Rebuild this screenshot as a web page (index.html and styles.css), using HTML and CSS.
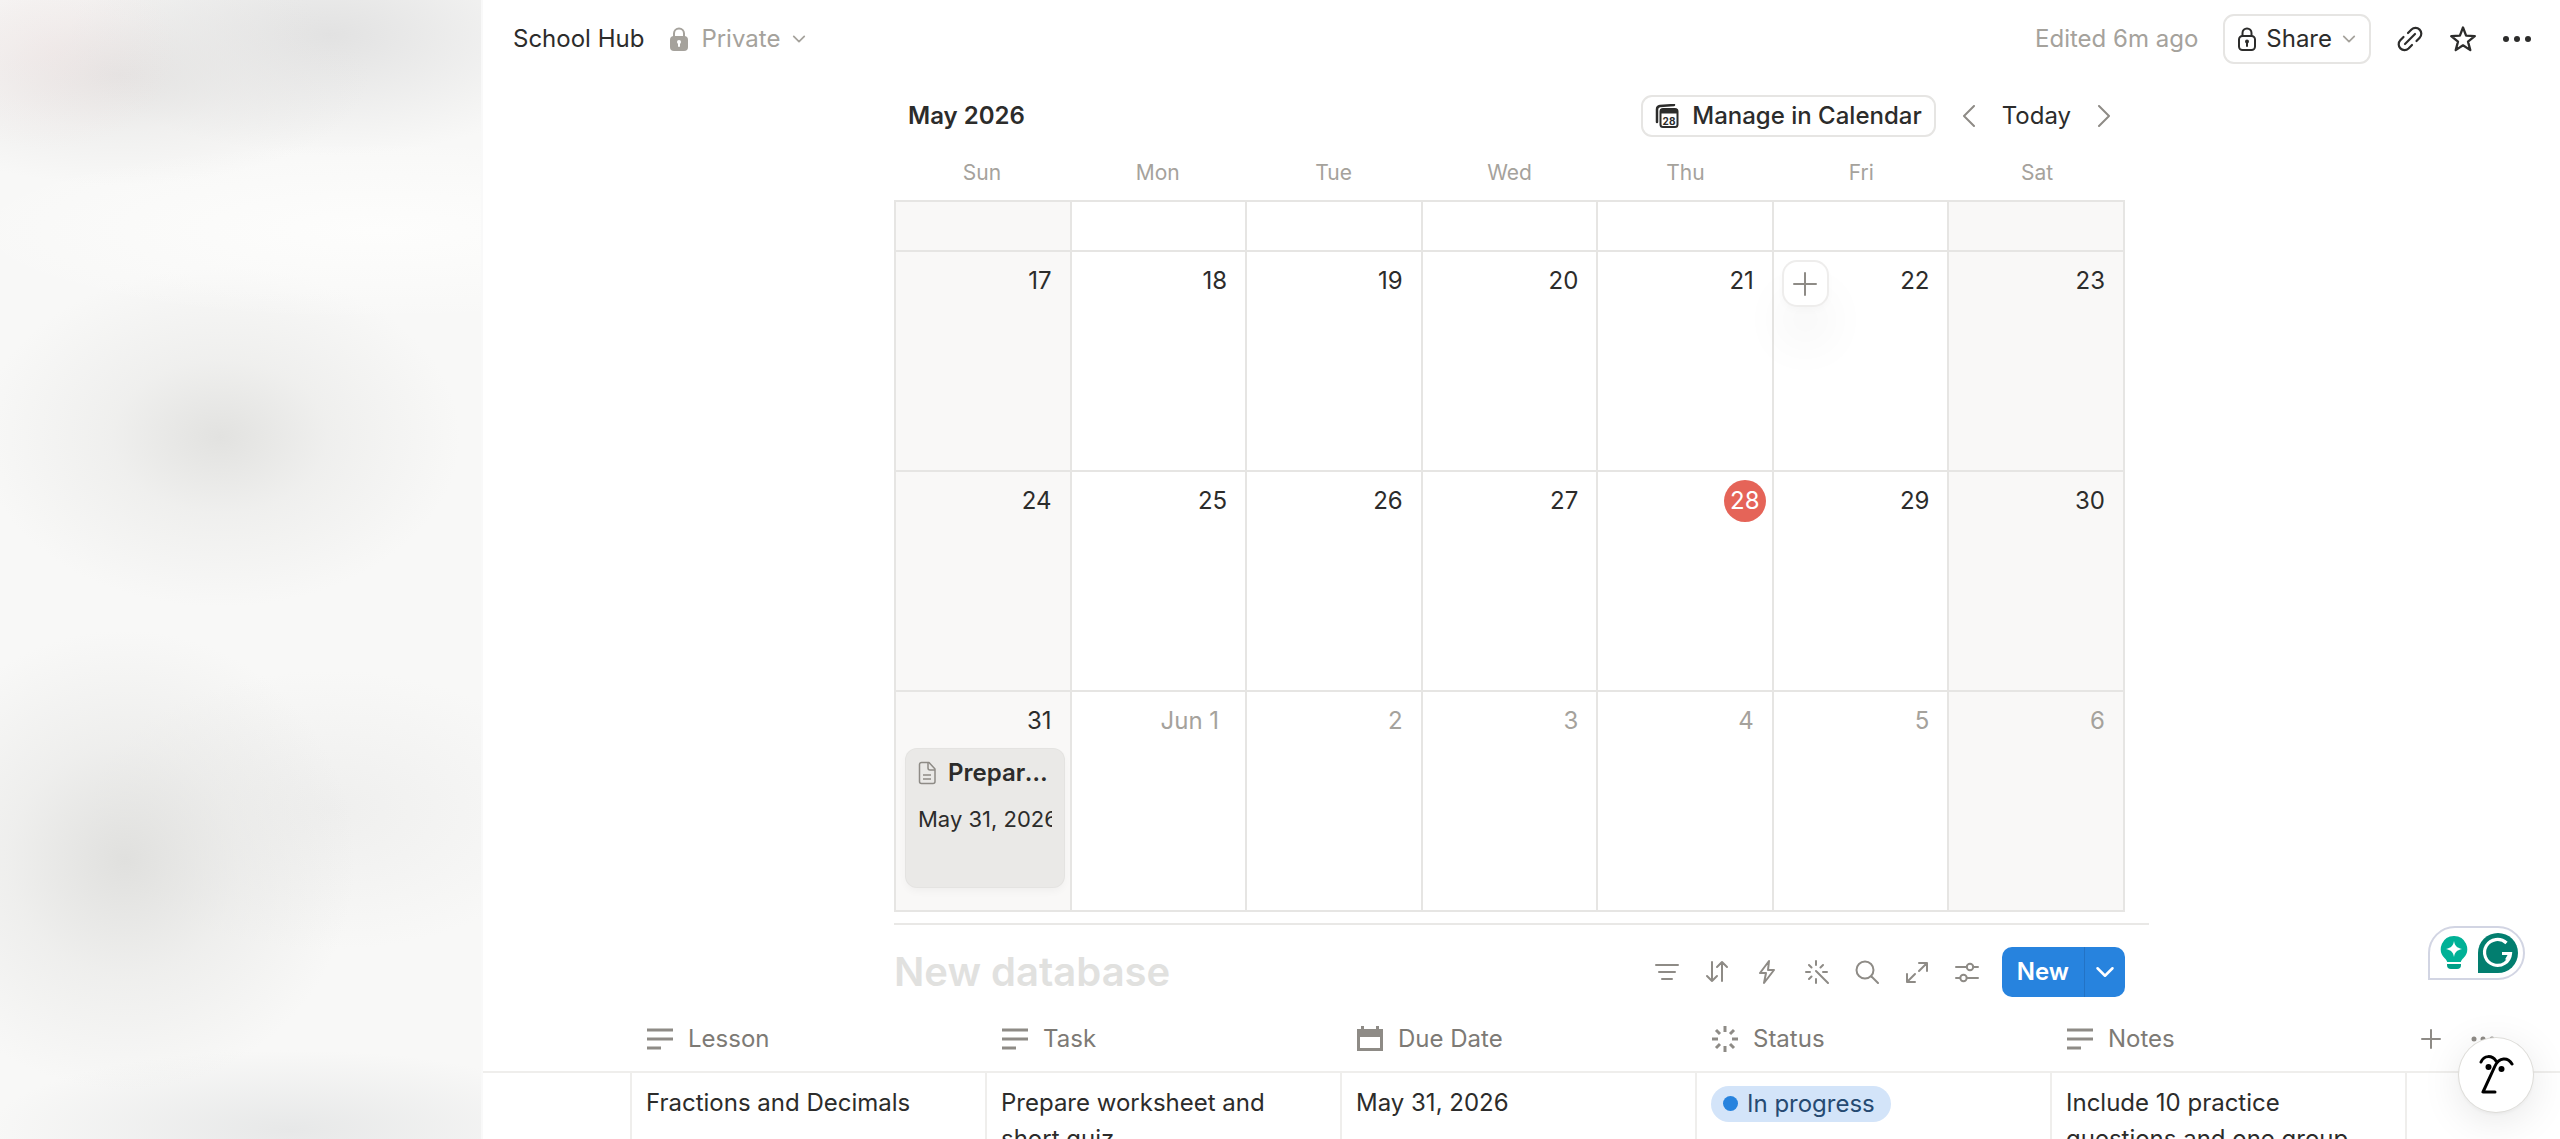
FILE: index.html
```html
<!DOCTYPE html>
<html lang="en">
<head>
  <meta charset="UTF-8" />
  <meta name="viewport" content="width=device-width, initial-scale=1" />
  <title>School Hub</title>
  <link rel="stylesheet" href="styles.css">
</head>
<body>

  <svg class="symbols" aria-hidden="true">
    <symbol id="icon-text" viewBox="0 0 28 28"><path d="M1 5h26M1 14h26M1 23h14" stroke="currentColor" stroke-width="3" /></symbol>
    <symbol id="icon-chevron" viewBox="0 0 16 16"><path d="M2 5l6 6 6-6" fill="none" stroke="currentColor" stroke-width="2" stroke-linecap="round" stroke-linejoin="round" /></symbol>
  </svg>

  <div class="app">
    <aside class="sidebar"></aside>

    <div class="page">
      <header class="topbar">
        <div class="breadcrumb">
          <a href="#" class="page-name">School Hub</a>
          <button type="button" class="privacy">
            <svg width="20" height="24" viewBox="0 0 20 24"><path d="M5 11V6.500a5 5 0 0 1 10 0V11" fill="none" stroke="currentColor" stroke-width="2" /><rect x="1" y="9" width="18" height="15" rx="4" fill="currentColor" /><circle cx="10" cy="15" r="2" fill="#fff" /><path d="M10 15v4" stroke="#fff" stroke-width="2" stroke-linecap="round" /></svg>
            <span>Private</span>
            <svg class="chevron" width="14" height="14"><use href="#icon-chevron" /></svg>
          </button>
        </div>
        <div class="actions">
          <span class="edited">Edited 6m ago</span>
          <button type="button" class="share">
            <svg width="18" height="24" viewBox="0 0 18 24" fill="none" stroke="currentColor" stroke-width="2"><path d="M4.500 9V6a4.500 4.500 0 0 1 9 0v3" /><rect x="1" y="9" width="16" height="14" rx="3.500" /><path d="M9 15v4" stroke-linecap="round" /><circle cx="9" cy="14.500" r="1" fill="currentColor" /></svg>
            <span>Share</span>
            <svg class="chevron" width="14" height="14"><use href="#icon-chevron" /></svg>
          </button>
          <button type="button" class="icon-btn" aria-label="Copy link">
            <svg width="28" height="28" viewBox="0 0 28 28" fill="none" stroke="currentColor" stroke-width="2.200" stroke-linecap="round"><path d="M9 19L19 9" /><path d="M12 8l3.500-3.500a5.800 5.800 0 0 1 8.200 8.200L20.500 16" /><path d="M16 20l-3.500 3.500a5.800 5.800 0 0 1-8.200-8.200L7.500 12" /></svg>
          </button>
          <button type="button" class="icon-btn" aria-label="Favorite">
            <svg width="28" height="28" viewBox="0 0 28 28"><path d="M14 2.500l3.100 8.200 8.700.4-6.800 5.500 2.300 8.500-7.300-4.800-7.300 4.800L9 16.600l-6.800-5.500 8.700-.4z" fill="none" stroke="currentColor" stroke-width="2.300" stroke-linejoin="round" /></svg>
          </button>
          <button type="button" class="icon-btn" aria-label="More">
            <svg width="30" height="8" viewBox="0 0 30 8" fill="currentColor"><circle cx="4" cy="4" r="3" /><circle cx="15" cy="4" r="3" /><circle cx="26" cy="4" r="3" /></svg>
          </button>
        </div>
      </header>

      <main>
        <section class="column">
          <div class="calendar">
            <div class="calendar-head">
              <h2>May 2026</h2>
              <div class="calendar-nav">
                <button type="button" class="manage">
                  <svg width="24" height="24" viewBox="0 0 24 24"><path d="M2 18V5.500A3.500 3.500 0 0 1 5 2l14-1" fill="none" stroke="currentColor" stroke-width="2.500" stroke-linecap="round" /><rect x="5.500" y="5" width="17" height="18" rx="2.500" fill="none" stroke="currentColor" stroke-width="2" /><path d="M5.500 5h17v4.500h-17z" fill="currentColor" /><text x="14" y="20.500" text-anchor="middle" class="icon-date">28</text></svg>
                  <span>Manage in Calendar</span>
                </button>
                <button type="button" class="icon-btn arrow" aria-label="Previous month">
                  <svg width="14" height="22" viewBox="0 0 14 22"><path d="M12 1L2 11l10 10" fill="none" stroke="currentColor" stroke-width="2" stroke-linecap="round" stroke-linejoin="round" /></svg>
                </button>
                <button type="button" class="today-btn">Today</button>
                <button type="button" class="icon-btn arrow" aria-label="Next month">
                  <svg width="14" height="22" viewBox="0 0 14 22"><path d="M2 1l10 10L2 21" fill="none" stroke="currentColor" stroke-width="2" stroke-linecap="round" stroke-linejoin="round" /></svg>
                </button>
              </div>
            </div>

            <div class="weekdays">
              <span>Sun</span><span>Mon</span><span>Tue</span><span>Wed</span><span>Thu</span><span>Fri</span><span>Sat</span>
            </div>

            <div class="days">
              <div class="day cut weekend"></div>
              <div class="day cut"></div>
              <div class="day cut"></div>
              <div class="day cut"></div>
              <div class="day cut"></div>
              <div class="day cut"></div>
              <div class="day cut weekend"></div>

              <div class="day weekend"><span class="num">17</span></div>
              <div class="day"><span class="num">18</span></div>
              <div class="day"><span class="num">19</span></div>
              <div class="day"><span class="num">20</span></div>
              <div class="day"><span class="num">21</span></div>
              <div class="day">
                <span class="num">22</span>
                <button type="button" class="add" aria-label="Add item">
                  <svg width="24" height="24" viewBox="0 0 24 24"><path d="M12 1v22M1 12h22" stroke="currentColor" stroke-width="2" stroke-linecap="round" /></svg>
                </button>
              </div>
              <div class="day weekend"><span class="num">23</span></div>

              <div class="day weekend"><span class="num">24</span></div>
              <div class="day"><span class="num">25</span></div>
              <div class="day"><span class="num">26</span></div>
              <div class="day"><span class="num">27</span></div>
              <div class="day"><span class="num today">28</span></div>
              <div class="day"><span class="num">29</span></div>
              <div class="day weekend"><span class="num">30</span></div>

              <div class="day weekend">
                <span class="num">31</span>
                <a href="#" class="event">
                  <span class="event-title">
                    <svg width="18" height="24" viewBox="0 0 18 24" fill="none" stroke="currentColor" stroke-width="1.500" stroke-linejoin="round"><path d="M3.500 1.500H11l6 6.500v12.500a2 2 0 0 1-2 2H3.500a2 2 0 0 1-2-2v-17a2 2 0 0 1 2-2z" /><path d="M10 1.500V7a2 2 0 0 0 2 2h5M5 14h8M5 18h8" /></svg>
                    <span>Prepare worksheet</span>
                  </span>
                  <span class="event-date">May 31, 2026</span>
                </a>
              </div>
              <div class="day other"><span class="num long">Jun 1</span></div>
              <div class="day other"><span class="num">2</span></div>
              <div class="day other"><span class="num">3</span></div>
              <div class="day other"><span class="num">4</span></div>
              <div class="day other"><span class="num">5</span></div>
              <div class="day other weekend"><span class="num">6</span></div>
            </div>
          </div>

          <hr>

          <div class="db-head">
            <input type="text" class="db-title" placeholder="New database" aria-label="Database title">
            <div class="db-tools">
              <button type="button" class="tool" aria-label="Filter"><svg viewBox="0 0 24 24"><path d="M1 5h22M4 12h16M7 19h10" /></svg></button>
              <button type="button" class="tool" aria-label="Sort"><svg viewBox="0 0 24 24"><path d="M7 2v19M2 16l5 5 5-5M17 21V2M12 7l5-5 5 5" /></svg></button>
              <button type="button" class="tool" aria-label="Automations"><svg viewBox="0 0 24 24"><path d="M14 1L5 13h6l-2 10 10-13h-6z" /></svg></button>
              <button type="button" class="tool" aria-label="Autofill"><svg viewBox="0 0 24 24"><path d="M11 11l12 12M11 1v4M11 19v4M1 12h4M18 12h4M4 5l2.500 2.500M18 5l-2.500 2.500M4 19l2.500-2.500" /></svg></button>
              <button type="button" class="tool" aria-label="Search"><svg viewBox="0 0 24 24"><circle cx="10" cy="10" r="8.500" /><path d="M16.500 16.500L23 23" /></svg></button>
              <button type="button" class="tool" aria-label="Open as full page"><svg viewBox="0 0 24 24"><path d="M14 3h8v8M22 3l-8 8M10 22H2v-8M2 22l8-8" /></svg></button>
              <button type="button" class="tool" aria-label="View settings"><svg viewBox="0 0 24 24"><path d="M1 7h10.500M18.500 7H23M1 18h4M12 18h11" /><circle cx="15" cy="7" r="3.200" /><circle cx="8.500" cy="18" r="3.200" /></svg></button>
              <div class="new-group">
                <button type="button" class="new">New</button>
                <button type="button" class="new-more" aria-label="New options"><svg width="20" height="20"><use href="#icon-chevron" /></svg></button>
              </div>
            </div>
          </div>
        </section>

        <table class="db-table">
          <colgroup>
            <col class="col-gutter"><col class="col-data"><col class="col-data"><col class="col-data"><col class="col-data"><col class="col-data"><col>
          </colgroup>
          <thead>
            <tr>
              <td></td>
              <th scope="col"><span class="prop"><svg width="28" height="28"><use href="#icon-text" /></svg>Lesson</span></th>
              <th scope="col"><span class="prop"><svg width="28" height="28"><use href="#icon-text" /></svg>Task</span></th>
              <th scope="col"><span class="prop"><svg width="28" height="28" viewBox="0 0 28 28"><path d="M1 4h4V1h3v3h12V1h3v3h4v22H1zm3 8v11h20V12z" fill="currentColor" fill-rule="evenodd" /></svg>Due Date</span></th>
              <th scope="col"><span class="prop"><svg width="28" height="28" viewBox="0 0 28 28"><path d="M14 1v6M14 21v6M1 14h6M21 14h6M5 5l4 4M19 19l4 4M5 23l4-4M19 9l4-4" stroke="currentColor" stroke-width="3" /></svg>Status</span></th>
              <th scope="col"><span class="prop"><svg width="28" height="28"><use href="#icon-text" /></svg>Notes</span></th>
              <td>
                <div class="table-actions">
                  <button type="button" class="icon-btn" aria-label="Add property"><svg width="20" height="20" viewBox="0 0 20 20"><path d="M10 1v18M1 10h18" stroke="currentColor" stroke-width="2" stroke-linecap="round" /></svg></button>
                  <button type="button" class="icon-btn" aria-label="Table options"><svg width="24" height="6" viewBox="0 0 24 6" fill="currentColor"><circle cx="3" cy="3" r="2.500" /><circle cx="12" cy="3" r="2.500" /><circle cx="21" cy="3" r="2.500" /></svg></button>
                </div>
              </td>
            </tr>
          </thead>
          <tbody>
            <tr>
              <td></td>
              <td>Fractions and Decimals</td>
              <td>Prepare worksheet and short quiz</td>
              <td>May 31, 2026</td>
              <td><span class="status">In progress</span></td>
              <td>Include 10 practice questions and one group</td>
              <td></td>
            </tr>
          </tbody>
        </table>
      </main>
    </div>
  </div>

  <div class="writing-widget">
    <svg width="28" height="36" viewBox="0 0 28 36"><path d="M14 1a13 13 0 0 1 9.500 22c-1.500 1.600-2.300 2.600-2.700 4H7.200c-.4-1.400-1.200-2.400-2.700-4A13 13 0 0 1 14 1z" fill="#00b196" /><path d="M14 6c1 5 2.500 6.500 8 8-5.500 1.500-7 3-8 8-1-5-2.500-6.500-8-8 5.500-1.500 7-3 8-8z" fill="#fff" /><path d="M7 29h14v1a4 4 0 0 1-4 4h-6a4 4 0 0 1-4-4z" fill="#009f87" /></svg>
    <svg width="40" height="40" viewBox="0 0 40 40"><path d="M20 0a20 20 0 1 1 0 40H0V20A20 20 0 0 1 20 0z" fill="#027e6f" /><path d="M28.500 10A13 13 0 1 0 32.500 20.500H24M32.500 20l-4 7" fill="none" stroke="#fff" stroke-width="3.200" /></svg>
  </div>

  <button type="button" class="assistant" aria-label="Assistant">
    <svg width="36" height="44" viewBox="0 0 36 44" fill="none" stroke="#000" stroke-width="3" stroke-linecap="round"><path d="M3 9c3-7 11-7 15-1" /><path d="M34 11c-4-7-13-7-17 2L5 39h12" stroke-linejoin="round" /><circle cx="10.500" cy="14" r="3" fill="#000" stroke="none" /><circle cx="23.500" cy="16" r="3" fill="#000" stroke="none" /></svg>
  </button>

</body>
</html>
```
FILE: styles.css
```css
* {
  box-sizing: border-box;
}

body {
  margin: 0;
  font-family: Inter, "Liberation Sans", sans-serif;
  font-size: 24px;
  line-height: 36px;
  color: #2c2c2b;
  background-color: #fff;
}

button {
  font: inherit;
  color: inherit;
  background: none;
  border: none;
  padding: 0;
  display: flex;
  align-items: center;
  cursor: pointer;
}

a {
  color: inherit;
  text-decoration: none;
}

svg {
  flex: none;
}

.symbols {
  display: none;
}

.app {
  display: flex;
  height: 100vh;
  overflow: hidden;
}

/* sidebar */
.sidebar {
  flex: none;
  width: 483px;
  border-right: 2px solid #f9f9f9;
  background:
    radial-gradient(ellipse 130px 100px at 50px 50px, rgba(245, 225, 225, 0.3), transparent),
    radial-gradient(ellipse 250px 110px at 120px 75px, #e4e3e2, rgba(228, 227, 226, 0.4) 50%, transparent),
    radial-gradient(ellipse 260px 120px at 330px 35px, #e2e2e2, rgba(226, 226, 226, 0.5) 50%, transparent),
    radial-gradient(ellipse 420px 90px at 380px 230px, #fdfdfc, transparent),
    radial-gradient(ellipse 240px 170px at 220px 437px, #e2e2e0, rgba(226, 226, 224, 0.4) 45%, transparent),
    radial-gradient(ellipse 230px 230px at 125px 860px, #e0e0de, rgba(224, 224, 222, 0.4) 50%, transparent),
    radial-gradient(ellipse 240px 140px at 330px 810px, #efefee, transparent),
    radial-gradient(ellipse 300px 80px at 290px 1130px, #e7e8e8, transparent),
    #f8f8f7;
}

.page {
  flex: 1;
  min-width: 0;
}

/* top bar */
.topbar {
  display: flex;
  justify-content: space-between;
  align-items: center;
  height: 78px;
  padding: 0 28px 0 30px;
}

.breadcrumb,
.actions {
  display: flex;
  align-items: center;
  gap: 25px;
}

.privacy {
  gap: 12px;
  color: #a5a29c;
}

.chevron {
  color: #a5a29c;
}

.edited {
  color: #a5a29c;
}

.share {
  height: 50px;
  padding: 0 13px;
  gap: 10px;
  border: 2px solid #e6e5e3;
  border-radius: 11px;
}

/* calendar */
.column {
  max-width: 1255px;
  margin: 0 auto;
}

.calendar {
  margin-right: 24px;
}

.calendar-head {
  display: flex;
  justify-content: space-between;
  align-items: center;
  height: 76px;
  padding: 0 14px;
}

.calendar-head h2 {
  margin: 0;
  font-size: 24px;
  font-weight: 600;
}

.calendar-nav {
  display: flex;
  align-items: center;
  gap: 26px;
}

.manage {
  height: 42px;
  padding: 0 12px;
  gap: 13px;
  border: 2px solid #e6e5e3;
  border-radius: 11px;
  font-weight: 500;
}

.icon-date {
  font-size: 10px;
  font-weight: 700;
  fill: currentColor;
}

.arrow {
  color: #8e8b86;
}

.weekdays {
  display: grid;
  grid-template-columns: repeat(7, minmax(0, 1fr));
  height: 46px;
  font-size: 21px;
  line-height: 38px;
  text-align: center;
  color: #a5a29c;
}

.days {
  display: grid;
  grid-template-columns: repeat(7, minmax(0, 1fr));
  border-top: 2px solid #e6e5e3;
  border-left: 2px solid #e6e5e3;
}

.day {
  position: relative;
  display: flex;
  flex-direction: column;
  height: 220px;
  padding: 8px 6px 0 10px;
  border-right: 2px solid #e6e5e3;
  border-bottom: 2px solid #e6e5e3;
}

.day.cut {
  height: 50px;
}

.day.weekend {
  background-color: #f9f8f7;
}

.day.other {
  color: #a5a29c;
}

.num {
  align-self: flex-end;
  line-height: 42px;
  padding-right: 12px;
}

.num.long {
  padding-right: 20px;
}

.num.today {
  width: 42px;
  padding: 0;
  border-radius: 50%;
  text-align: center;
  color: #fff;
  background-color: #e56458;
}

.add {
  position: absolute;
  top: 10px;
  left: 10px;
  width: 43px;
  height: 43px;
  justify-content: center;
  border-radius: 13px;
  color: #8e8b86;
  background-color: #fff;
  box-shadow: 0 0 0 2px #eeedec, 0 36px 50px rgba(0, 0, 0, 0.06), 0 4px 8px rgba(0, 0, 0, 0.03);
}

.event {
  display: block;
  height: 138px;
  margin-top: 7px;
  padding: 6px 12px 0;
  border-radius: 11px;
  background-color: #eae9e7;
  box-shadow: 0 0 0 1px #e4e3e1, 0 4px 8px rgba(0, 0, 0, 0.04);
}

.event-title {
  display: flex;
  align-items: center;
  gap: 12px;
  font-weight: 600;
}

.event-title svg {
  color: #8e8b86;
}

.event-title span {
  overflow: hidden;
  text-overflow: ellipsis;
  white-space: nowrap;
}

.event-date {
  display: block;
  margin-top: 10px;
  font-size: 22px;
  overflow: hidden;
  white-space: nowrap;
}

hr {
  margin: 11px 0 0;
  border: none;
  border-top: 2px solid #e9e8e6;
}

/* database */
.db-head {
  display: flex;
  justify-content: space-between;
  align-items: center;
  height: 94px;
  margin-right: 24px;
}

.db-title {
  flex: 1;
  min-width: 0;
  padding: 0;
  border: none;
  outline: none;
  font: 600 40px/50px Inter, "Liberation Sans", sans-serif;
  color: #2c2c2b;
}

.db-title::placeholder {
  color: #e1e1df;
  opacity: 1;
}

.db-tools {
  display: flex;
  align-items: center;
}

.tool {
  width: 50px;
  height: 50px;
  justify-content: center;
  color: #8e8b86;
}

.tool svg {
  width: 24px;
  height: 24px;
  fill: none;
  stroke: currentColor;
  stroke-width: 2;
  stroke-linecap: round;
  stroke-linejoin: round;
}

.new-group {
  display: flex;
  height: 50px;
  margin-left: 10px;
  border-radius: 10px;
  overflow: hidden;
  color: #fff;
  background-color: #2783de;
}

.new {
  padding: 0 15px;
  font-weight: 600;
}

.new-more {
  padding: 0 10px;
  border-left: 1px solid #2373c5;
}

.db-table {
  width: 100%;
  table-layout: fixed;
  border-collapse: separate;
  border-spacing: 0;
}

.col-gutter {
  width: 149px;
}

.col-data {
  width: 355px;
}

.db-table th,
.db-table thead td {
  height: 54px;
  padding: 0 14px 12px;
  border-bottom: 2px solid #efeeec;
  font-weight: 400;
  text-align: left;
  color: #7d7a75;
}

.prop,
.table-actions {
  display: flex;
  align-items: center;
  gap: 14px;
}

.prop svg {
  color: #8e8b86;
}

.table-actions {
  gap: 30px;
  color: #8e8b86;
}

.db-table tbody td {
  padding: 12px 14px;
  border-right: 2px solid #efeeec;
  vertical-align: top;
}

.db-table tbody td:last-child {
  border-right: none;
}

.status {
  display: inline-flex;
  align-items: center;
  gap: 9px;
  height: 36px;
  padding: 0 16px 0 12px;
  border-radius: 18px;
  color: #264a72;
  background-color: #d3e4f9;
}

.status::before {
  content: "";
  width: 15px;
  height: 15px;
  border-radius: 50%;
  background-color: #2783de;
}

/* floating widgets */
.writing-widget {
  position: fixed;
  right: 35px;
  bottom: 159px;
  display: flex;
  align-items: center;
  gap: 10px;
  height: 54px;
  padding: 0 5px 0 10px;
  border: 2px solid #d2d5e3;
  border-radius: 27px 27px 27px 0;
  background-color: #fff;
}

.assistant {
  position: fixed;
  right: 27px;
  bottom: 27px;
  width: 74px;
  height: 74px;
  justify-content: center;
  border-radius: 50%;
  background-color: #fff;
  box-shadow: 0 0 0 1px #dddcd8, 0 8px 40px rgba(0, 0, 0, 0.1), 0 2px 4px rgba(0, 0, 0, 0.06);
}
```
